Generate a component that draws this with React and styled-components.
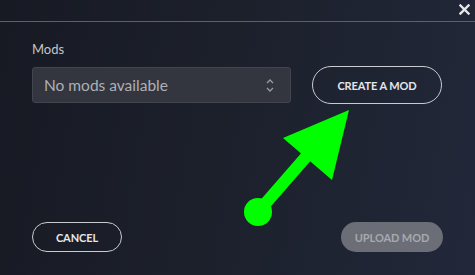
import React from "react";
import styled, { createGlobalStyle } from "styled-components";

const Global = createGlobalStyle`
  html, body { margin: 0; padding: 0; background: #1b1e28; }
  body { font-family: Lato, "Noto Sans", sans-serif; }
`;

const Dialog = styled.div`
  position: relative;
  width: 475px;
  height: 275px;
  box-sizing: border-box;
  background: linear-gradient(100deg, #171a23 0%, #1c202b 45%, #22283a 100%);
  display: flex;
  flex-direction: column;
  overflow: hidden;
`;

const Header = styled.div`
  height: 22px;
  box-sizing: border-box;
  border-bottom: 1px solid #5c6069;
  display: flex;
  justify-content: flex-end;
  align-items: center;
  padding: 0 5px 2px 0;
`;

const Close = styled.button`
  background: none;
  border: none;
  padding: 0;
  width: 11px;
  height: 11px;
  display: flex;
  align-items: center;
  justify-content: center;
  cursor: pointer;
`;

const Body = styled.div`
  flex: 1;
  display: flex;
  flex-direction: column;
  padding: 19px 32px 23px 32px;
`;

const Label = styled.div`
  color: #c4c6cb;
  font-size: 13px;
  line-height: 16px;
  margin-bottom: 9px;
`;

const Row = styled.div`
  display: flex;
  align-items: center;
  gap: 21px;
`;

const Select = styled.div`
  width: 259px;
  height: 36px;
  box-sizing: border-box;
  background: #33363f;
  border: 1px solid #42454e;
  border-radius: 3px;
  display: flex;
  align-items: center;
  justify-content: space-between;
  padding: 0 16px 0 11px;
  color: #aeb0b6;
  font-size: 15.5px;
`;

const Pill = styled.button`
  height: ${(p) => p.$h}px;
  width: ${(p) => p.$w}px;
  box-sizing: border-box;
  border-radius: 999px;
  font-family: Lato, "Noto Sans", sans-serif;
  font-weight: 700;
  font-size: 11px;
  letter-spacing: -0.1px;
  display: flex;
  align-items: center;
  justify-content: center;
  padding: 0;
  border: ${(p) => (p.$filled ? "none" : "1px solid #c9cbd0")};
  background: ${(p) => (p.$filled ? "#6b6e76" : "transparent")};
  color: ${(p) => (p.$filled ? "#a6a9b0" : "#e4e6ea")};
`;

const Spacer = styled.div`
  flex: 1;
`;

const Footer = styled.div`
  display: flex;
  justify-content: space-between;
  align-items: center;
`;

const Arrow = styled.svg`
  position: absolute;
  left: 0;
  top: 0;
  pointer-events: none;
`;

export default function App() {
  return (
    <>
      <Global />
      <Dialog>
        <Header>
          <Close aria-label="close">
            <svg width="11" height="11" viewBox="0 0 11 11">
              <path d="M1.5 1.5 L9.5 9.5 M9.5 1.5 L1.5 9.5" stroke="#e6e7ea" strokeWidth="2.4" strokeLinecap="square" />
            </svg>
          </Close>
        </Header>
        <Body>
          <Label>Mods</Label>
          <Row>
            <Select>
              <span>No mods available</span>
              <svg width="8" height="15" viewBox="0 0 8 15">
                <path d="M1 5 L4 2 L7 5 M1 10 L4 13 L7 10" fill="none" stroke="#9a9ca3" strokeWidth="1.3" />
              </svg>
            </Select>
            <Pill $w={130} $h={38}>CREATE A MOD</Pill>
          </Row>
          <Spacer />
          <Footer>
            <Pill $w={90} $h={30}>CANCEL</Pill>
            <Pill $w={102} $h={30} $filled>UPLOAD MOD</Pill>
          </Footer>
        </Body>
        <Arrow width="475" height="275" viewBox="0 0 475 275">
          <line x1="258" y1="212" x2="312" y2="150" stroke="#00ff00" strokeWidth="12" />
          <polygon points="349,110 283,138 332,180" fill="#00ff00" />
          <circle cx="258" cy="212" r="14" fill="#00ff00" />
        </Arrow>
      </Dialog>
    </>
  );
}
